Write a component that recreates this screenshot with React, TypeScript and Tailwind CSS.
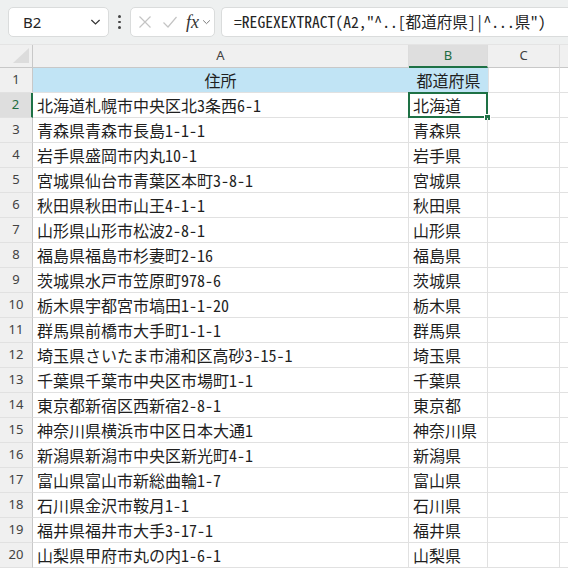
import React from "react";

const rows: Array<[string, string]> = [
  ["北海道札幌市中央区北3条西6-1", "北海道"],
  ["青森県青森市長島1-1-1", "青森県"],
  ["岩手県盛岡市内丸10-1", "岩手県"],
  ["宮城県仙台市青葉区本町3-8-1", "宮城県"],
  ["秋田県秋田市山王4-1-1", "秋田県"],
  ["山形県山形市松波2-8-1", "山形県"],
  ["福島県福島市杉妻町2-16", "福島県"],
  ["茨城県水戸市笠原町978-6", "茨城県"],
  ["栃木県宇都宮市塙田1-1-20", "栃木県"],
  ["群馬県前橋市大手町1-1-1", "群馬県"],
  ["埼玉県さいたま市浦和区高砂3-15-1", "埼玉県"],
  ["千葉県千葉市中央区市場町1-1", "千葉県"],
  ["東京都新宿区西新宿2-8-1", "東京都"],
  ["神奈川県横浜市中区日本大通1", "神奈川県"],
  ["新潟県新潟市中央区新光町4-1", "新潟県"],
  ["富山県富山市新総曲輪1-7", "富山県"],
  ["石川県金沢市鞍月1-1", "石川県"],
  ["福井県福井市大手3-17-1", "福井県"],
  ["山梨県甲府市丸の内1-6-1", "山梨県"],
];

// half-width Latin like a Japanese gothic
const cjk = "font-['Noto_Sans_CJK_JP','Noto_Sans',sans-serif] [font-feature-settings:'hwid']";
const ui = "font-['Noto_Sans','Liberation_Sans',sans-serif] [font-feature-settings:normal]";
const cols = "grid grid-cols-[33px_376px_79px_72px_1fr]";

function Chevron({ className = "" }: { className?: string }) {
  return (
    <svg viewBox="0 0 12 8" className={className} fill="none" stroke="currentColor" strokeWidth="1.3">
      <path d="M1.5 1.8 6 6.2l4.5-4.4" />
    </svg>
  );
}

function RowHead({ n, active = false }: { n: number; active?: boolean }) {
  return (
    <div
      className={`flex items-center justify-center border-b border-[#e1e1e1] text-[13px] ${ui} ${
        active ? "bg-[#dedede] text-[#1e6c41] border-r-2 border-r-[#1e7145]" : "bg-[#f0f0f0] text-[#424242] border-r border-r-[#c8c8c8]"
      }`}
    >
      {n}
    </div>
  );
}

export default function App() {
  return (
    <div className={`w-[568px] h-[568px] overflow-hidden bg-white ${cjk}`}>
      {/* formula bar */}
      <div className="h-[44px] bg-[#eef0f0] flex items-center pl-[8px] gap-0">
        <div className="w-[101px] h-[30px] bg-white rounded-[5px] border border-[#dadcdc] flex items-center justify-between pl-[14px] pr-[7px]">
          <span className={`text-[15px] text-[#242424] ${ui}`}>B2</span>
          <Chevron className="w-[11px] h-[8px] text-[#333]" />
        </div>
        <div className="w-[21px] flex flex-col items-center gap-[3px]">
          <span className="w-[2.5px] h-[2.5px] rounded-full bg-[#444]" />
          <span className="w-[2.5px] h-[2.5px] rounded-full bg-[#444]" />
          <span className="w-[2.5px] h-[2.5px] rounded-full bg-[#444]" />
        </div>
        <div className="w-[85px] h-[30px] bg-white rounded-[5px] border border-[#dadcdc] flex items-center pl-[6px]">
          <svg viewBox="0 0 16 16" className="w-[16px] h-[16px] text-[#c4c4c4]" fill="none" stroke="currentColor" strokeWidth="1.2">
            <path d="M2.5 2.5l11 11M13.5 2.5l-11 11" />
          </svg>
          <svg viewBox="0 0 16 16" className="ml-[9px] w-[16px] h-[16px] text-[#c4c4c4]" fill="none" stroke="currentColor" strokeWidth="1.2">
            <path d="M1.5 8.5l4.5 4.5L14.5 3" />
          </svg>
          <span className="ml-[8px] text-[18px] leading-none italic text-[#333] font-['Liberation_Serif',serif] [font-feature-settings:normal]">fx</span>
          <Chevron className="ml-[3px] w-[9px] h-[6px] text-[#777]" />
        </div>
        <div className="ml-[6px] flex-1 h-[30px] bg-white rounded-l-[5px] border border-r-0 border-[#dadcdc] flex items-center pl-[12px] whitespace-nowrap overflow-hidden">
          <span className="text-[15.6px] text-[#242424]">=REGEXEXTRACT(A2,"^..[都道府県]|^...県")</span>
        </div>
      </div>

      {/* column headers */}
      <div className={`${cols} h-[24px] bg-[#f0f0f0] border-t border-[#e4e4e4] text-[13px] ${ui}`}>
        <div className="relative border-r border-b border-[#c8c8c8]">
          <div className="absolute right-[3px] bottom-[4px] w-0 h-0 border-l-[16px] border-l-transparent border-b-[15px] border-b-[#dcdcdc]" />
        </div>
        <div className="flex items-center justify-center border-r border-[#dcdcdc] border-b border-b-[#c8c8c8] text-[#424242]">A</div>
        <div className="flex items-center justify-center bg-[#dedede] border-r border-[#dcdcdc] border-b-2 border-b-[#1e7145] text-[#1e6c41]">B</div>
        <div className="flex items-center justify-center border-r border-[#dcdcdc] border-b border-b-[#c8c8c8] text-[#424242]">C</div>
        <div className="border-b border-[#c8c8c8]" />
      </div>

      {/* row 1 */}
      <div className={`${cols} h-[25px] text-[16px] text-[#1f1f1f]`}>
        <RowHead n={1} />
        <div className="flex items-center justify-center bg-[#c1e4f5] border-r border-[#c1e4f5] border-b border-b-[#e1e1e1] leading-none">住所</div>
        <div className="flex items-center justify-center bg-[#c1e4f5] border-b border-[#e1e1e1] leading-none">都道府県</div>
        <div className="border-l border-r border-b border-[#e1e1e1]" />
        <div className="border-b border-[#e1e1e1]" />
      </div>

      {rows.map(([addr, pref], i) => {
        const n = i + 2;
        const active = n === 2;
        return (
          <div key={n} className={`${cols} h-[25px] text-[16px] text-[#1f1f1f]`}>
            <RowHead n={n} active={active} />
            <div className="flex items-center pl-[4px] border-r border-b border-[#e1e1e1] leading-none whitespace-nowrap">{addr}</div>
            <div className="relative flex items-center pl-[4px] border-r border-b border-[#e1e1e1] leading-none whitespace-nowrap">
              {pref}
              {active && (
                <>
                  <div className="absolute left-[-1px] top-[-1px] right-[-1px] bottom-[-1px] border-2 border-[#1e7145]" />
                  <div className="absolute right-[-4px] bottom-[-4px] w-[7px] h-[7px] bg-[#1e7145] border border-white" />
                </>
              )}
            </div>
            <div className="border-r border-b border-[#e1e1e1]" />
            <div className="border-b border-[#e1e1e1]" />
          </div>
        );
      })}
    </div>
  );
}
